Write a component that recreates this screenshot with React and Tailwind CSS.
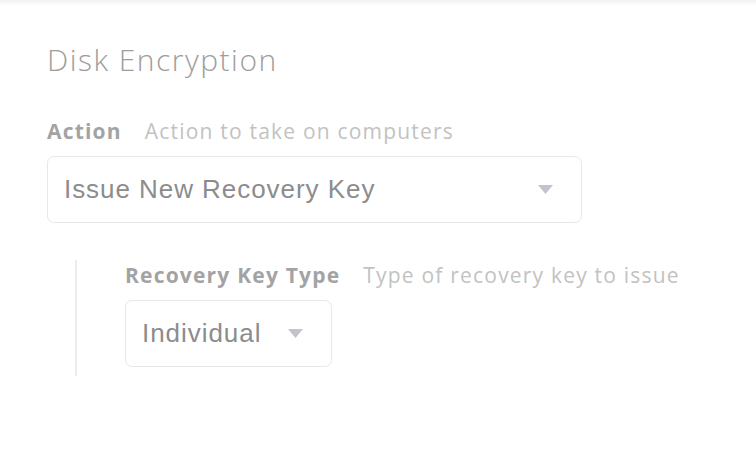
import { useState } from 'react'

// Small grey triangle used as the select caret
function Caret() {
  return (
    <svg width="15" height="9" viewBox="0 0 15 9" className="shrink-0">
      <path d="M0 0 H15 L7.5 9 Z" fill="#c3c3cb" />
    </svg>
  )
}

function Select({ value, className = '' }) {
  return (
    <div
      className={`h-[67px] flex items-center justify-between rounded-[7px] border border-[#e8e8e8] bg-white pl-[16px] ${className}`}
    >
      <span className="text-[26px] tracking-[0.95px] text-[#8c8c8c] font-['Liberation_Sans',Arial,sans-serif]">
        {value}
      </span>
      <Caret />
    </div>
  )
}

function FieldLabel({ label, hint }) {
  return (
    <div className="flex items-baseline gap-[23px] font-['Open_Sans',sans-serif] text-[21px] leading-[24px] tracking-[1.2px]">
      <span className="font-bold text-[#a3a3a3]">{label}</span>
      <span className="text-[#c2c2c2]">{hint}</span>
    </div>
  )
}

export default function App() {
  const [action] = useState('Issue New Recovery Key')

  return (
    <div className="w-[756px] h-[452px] bg-white overflow-hidden relative">
      {/* faint shadow under the header above */}
      <div className="h-[6px] bg-gradient-to-b from-[#f1f1f1] to-white" />

      <div className="pl-[47px] pt-[36px]">
        <h2 className="font-['Open_Sans',sans-serif] font-light text-[30px] leading-[36px] tracking-[1.5px] text-[#9d9d9d]">
          Disk Encryption
        </h2>

        <div className="mt-[41px]">
          <FieldLabel label="Action" hint="Action to take on computers" />
          <Select value={action} className="mt-[13px] w-[535px] pr-[28px]" />
        </div>

        <div className="mt-[37px] ml-[28px] border-l-2 border-[#ebebeb] pl-[48px] pt-[3px] pb-[9px]">
          <FieldLabel label="Recovery Key Type" hint="Type of recovery key to issue" />
          <Select value="Individual" className="mt-[13px] w-[207px] pr-[28px]" />
        </div>
      </div>
    </div>
  )
}
